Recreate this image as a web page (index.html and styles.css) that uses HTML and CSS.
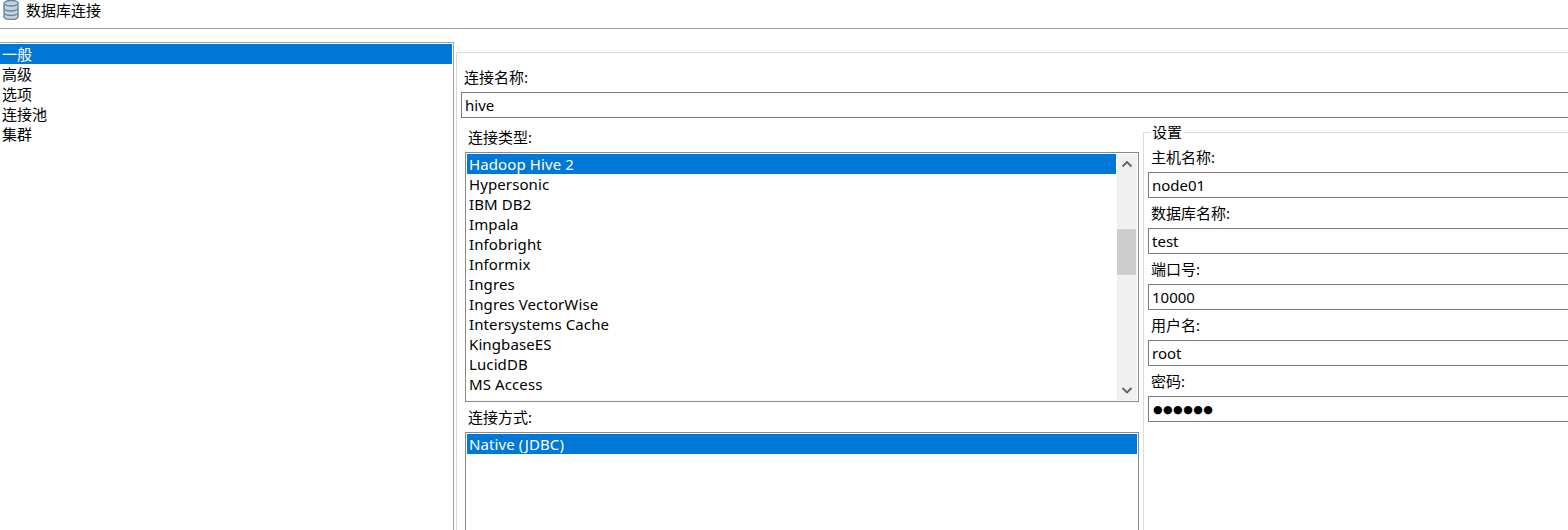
FILE: index.html
```html
<!DOCTYPE html>
<html lang="zh">
<head>
<meta charset="utf-8">
<title>数据库连接</title>
<link rel="stylesheet" href="styles.css">
</head>
<body>
<header class="titlebar">
  <svg class="db-icon" width="16" height="20" viewBox="0 0 16 20" aria-hidden="true">
    <path d="M1 3.500C1 1.600 4 .5 8 .5s7 1.100 7 3v13c0 1.900-3 3-7 3s-7-1.100-7-3z" fill="#c4d2dd" stroke="#66859d" stroke-width="1.400"/>
    <path d="M1.500 4.500c1.500 1 3.800 1.500 6.500 1.500s5-.5 6.500-1.500M1.500 9.500c1.500 1 3.800 1.500 6.500 1.500s5-.5 6.500-1.500M1.500 14c1.500 1 3.800 1.500 6.500 1.500s5-.5 6.500-1.500" fill="none" stroke="#66859d" stroke-width="1.400"/>
  </svg>
  <span>数据库连接</span>
</header>
<main class="main">
  <nav class="sidebar">
    <div class="row selected">一般</div>
    <div class="row">高级</div>
    <div class="row">选项</div>
    <div class="row">连接池</div>
    <div class="row">集群</div>
  </nav>
  <section class="panel">
    <div class="label name-label">连接名称:</div>
    <div class="input name-input">hive</div>
    <div class="columns">
      <div class="lists">
        <div class="label list-label">连接类型:</div>
        <div class="listbox types">
          <div class="items">
            <div class="row selected">Hadoop Hive 2</div>
            <div class="row">Hypersonic</div>
            <div class="row">IBM DB2</div>
            <div class="row">Impala</div>
            <div class="row">Infobright</div>
            <div class="row">Informix</div>
            <div class="row">Ingres</div>
            <div class="row">Ingres VectorWise</div>
            <div class="row">Intersystems Cache</div>
            <div class="row">KingbaseES</div>
            <div class="row">LucidDB</div>
            <div class="row">MS Access</div>
            <div class="row">MS SQL Server</div>
          </div>
          <div class="scrollbar">
            <svg class="arrow" width="20" height="20" viewBox="0 0 20 20" aria-hidden="true"><path d="M5.500 12.500 10 8l4.500 4.500" fill="none" stroke="#606060" stroke-width="1.800"/></svg>
            <div class="track"><div class="thumb"></div></div>
            <svg class="arrow" width="20" height="20" viewBox="0 0 20 20" aria-hidden="true"><path d="M5.500 8 10 12.500 14.500 8" fill="none" stroke="#606060" stroke-width="1.800"/></svg>
          </div>
        </div>
        <div class="label list-label method-label">连接方式:</div>
        <div class="listbox method">
          <div class="items">
            <div class="row selected">Native (JDBC)</div>
          </div>
        </div>
      </div>
      <fieldset class="settings">
        <legend>设置</legend>
        <div class="label">主机名称:</div>
        <div class="input">node01</div>
        <div class="label">数据库名称:</div>
        <div class="input">test</div>
        <div class="label">端口号:</div>
        <div class="input">10000</div>
        <div class="label">用户名:</div>
        <div class="input">root</div>
        <div class="label">密码:</div>
        <div class="input password">●●●●●●</div>
      </fieldset>
    </div>
  </section>
</main>
</body>
</html>
```
FILE: styles.css
```css
* { box-sizing: border-box; }
html, body { margin: 0; padding: 0; }
body {
  width: 1568px;
  height: 530px;
  overflow: hidden;
  background: #fff;
  color: #000;
  font: 15px/20px "Noto Sans", "Noto Sans CJK SC", sans-serif;
}
.titlebar {
  height: 29px;
  border-bottom: 1px solid #a0a0a0;
  display: flex;
  align-items: flex-start;
  gap: 7px;
  padding-left: 3px;
}
.titlebar span { font-size: 15px; line-height: 20px; }
.db-icon { display: block; flex: none; }
.main { display: flex; height: 501px; }
.sidebar {
  flex: none;
  width: 454px;
  margin-top: 13px;
  border-top: 1px solid #a0a0a0;
  border-right: 1px solid #a0a0a0;
  padding: 1px 1px 0 0;
}
.sidebar .row { padding-left: 2px; }
.row { height: 20px; line-height: 20px; white-space: nowrap; }
.row.selected { background: #0078d7; color: #fff; }
.panel {
  flex: none;
  width: 1300px;
  margin: 23px 0 0 2px;
  border: 1px solid #d9d9d9;
  border-width: 1px 0 0 1px;
  padding: 14px 0 0 4px;
}
.label { height: 20px; line-height: 20px; white-space: nowrap; }
.name-label { margin: 0 0 5px 3px; }
.input {
  height: 26px;
  border: 1px solid #7a7a7a;
  padding: 0 3px;
  line-height: 24px;
  white-space: nowrap;
}
.columns { display: flex; align-items: flex-start; margin-top: 4px; }
.lists { flex: none; width: 682px; padding: 5px 0 0 4px; }
.list-label { margin: 0 0 5px 3px; }
.method-label { margin-top: 5px; margin-bottom: 5px; }
.listbox {
  width: 674px;
  border: 1px solid #8a8a8a;
  padding: 1px;
  display: flex;
  overflow: hidden;
}
.types { height: 250px; }
.method { height: 110px; }
.items { flex: 1; min-width: 0; overflow: hidden; letter-spacing: .1px; }
.items .row { padding-left: 2px; }
.scrollbar {
  flex: none;
  width: 20px;
  margin-left: 1px;
  background: #f0f0f0;
  display: flex;
  flex-direction: column;
}
.arrow { display: block; flex: none; }
.track { flex: 1; padding-top: 55px; }
.thumb { width: 19px; height: 46px; background: #cdcdcd; }
.settings {
  flex: none;
  width: 600px;
  height: 420px;
  margin: 0;
  min-width: 0;
  padding: 0 0 0 4px;
  border: 0;
  border-top: 1px solid #dcdcdc;
  border-left: 1px solid #dcdcdc;
}
.settings legend {
  margin-left: 2px;
  padding: 0 2px;
  height: 20px;
  line-height: 20px;
}
.settings .label { margin: 5px 0 5px 3px; height: 20px; }
.settings .input { padding-left: 3px; }
.password { padding-top: 1px; font-family: "DejaVu Sans", sans-serif; font-size: 11px; letter-spacing: .45px; }
.settings .password { padding-left: 4px; }
```
